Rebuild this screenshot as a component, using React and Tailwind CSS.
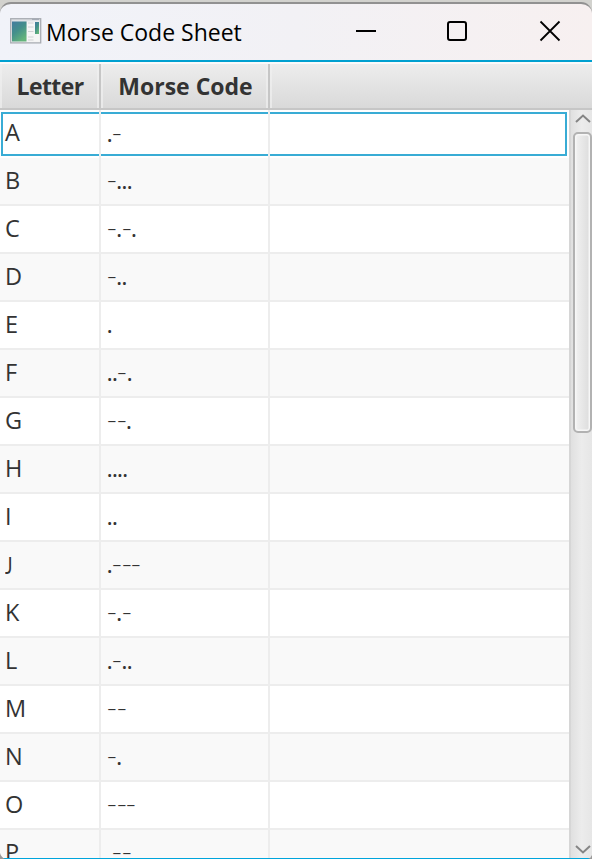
import React from "react";

const rows = [
  ["A", ".-"],
  ["B", "-..."],
  ["C", "-.-."],
  ["D", "-.."],
  ["E", "."],
  ["F", "..-."],
  ["G", "--."],
  ["H", "...."],
  ["I", ".."],
  ["J", ".---"],
  ["K", "-.-"],
  ["L", ".-.."],
  ["M", "--"],
  ["N", "-."],
  ["O", "---"],
  ["P", ".--."],
];

function AppIcon() {
  return (
    <svg width="32" height="26" viewBox="0 0 32 26" className="shrink-0">
      <defs>
        <linearGradient id="pane" x1="0" y1="0" x2="0.6" y2="1">
          <stop offset="0" stopColor="#437ba0" />
          <stop offset="0.5" stopColor="#438f8b" />
          <stop offset="1" stopColor="#64b47b" />
        </linearGradient>
        <linearGradient id="frame" x1="0" y1="0" x2="0" y2="1">
          <stop offset="0" stopColor="#dde0e4" />
          <stop offset="1" stopColor="#f3f3f3" />
        </linearGradient>
      </defs>
      <rect x="0.7" y="0.7" width="30" height="24.2" fill="url(#frame)" stroke="#a9adb3" strokeWidth="1.3" />
      <rect x="2" y="3.5" width="14.5" height="20" fill="url(#pane)" />
      <rect x="17" y="3.5" width="12.5" height="20" fill="#f6f6f6" />
      <path d="M18 5h5.5M18 9h5.5M18 13.5h5.5M18 19h5.5M18 22h5.5" stroke="#d0d2d4" strokeWidth="1.2" />
      <rect x="25" y="4" width="4" height="12" fill="url(#pane)" />
      <path d="M22 1.3h7" stroke="#9ba3ae" strokeWidth="1" />
    </svg>
  );
}

function HeaderCell({ children, className }) {
  return (
    <div className={`flex h-full items-center justify-center border-r-2 border-[#c6c6c6] ${className}`}>
      <div className="flex h-full w-full items-center justify-center border-x-2 border-[#f0f0f0]/70 text-[23px] font-bold whitespace-nowrap">
        {children}
      </div>
    </div>
  );
}

function Morse({ code }) {
  return (
    <span className="flex">
      {[...code].map((c, i) => (
        <span key={i} className={c === "-" ? "flex w-[9.6px] justify-center" : "flex w-[5.2px] justify-center"}>
          <span className={c === "-" ? "scale-x-125 font-light" : "translate-y-px"}>{c}</span>
        </span>
      ))}
    </span>
  );
}

function Row({ letter, code, index }) {
  const first = index === 0;
  const bg = index % 2 ? "bg-[#f9f9f9]" : "bg-white";
  const line = first ? "border-transparent" : "border-[#ededed]";
  const focus = "h-[44px] border-y-2 border-[#39acd5]";
  // The J sits on the baseline with a narrow hook.
  const glyph =
    letter === "J"
      ? "inline-block origin-left scale-x-75 font-['Lato','Open_Sans',sans-serif] pt-px"
      : "";
  return (
    <div className={`flex h-12 shrink-0 border-b-2 ${bg} ${line}`}>
      <div className={`w-[99px] shrink-0 ${first ? "pt-[2px] pl-px" : ""}`}>
        <div className={`flex items-center ${first ? focus + " border-l-2 pb-[4px] pl-[2px]" : "h-[46px] pb-[2px] pl-[5px]"}`}>
          <span className={`text-[23.5px] leading-[24px] ${glyph}`}>{letter}</span>
        </div>
      </div>
      <div className="-mb-[2px] w-[2px] shrink-0 bg-[#ededed]" />
      <div className={`w-[167px] shrink-0 ${first ? "pt-[2px]" : ""}`}>
        <div className={`flex items-center pl-[6px] ${first ? focus + " pb-[4px]" : "h-[46px] pb-[4px]"}`}>
          <span className="text-[24px] leading-none">
            <Morse code={code} />
          </span>
        </div>
      </div>
      <div className="-mb-[2px] w-[2px] shrink-0 bg-[#ededed]" />
      <div className={`grow ${first ? "pt-[2px] pr-[2px]" : ""}`}>
        <div className={first ? focus + " border-r-2" : ""} />
      </div>
    </div>
  );
}

export default function App() {
  return (
    <div className="relative flex h-[859px] w-[592px] flex-col overflow-hidden bg-[#d2d2ce] pt-[2px] font-['Open_Sans','Noto_Sans',sans-serif] text-[#333333]">
      <div className="flex h-[58px] shrink-0 items-center rounded-t-[11px] border-t-2 border-[#919191] bg-linear-to-r from-[#f1f3f9] via-[#f2f1f5] to-[#f7f0f0] pl-[10px]">
        <div className="-mt-[2px] flex">
          <AppIcon />
        </div>
        <span className="ml-[4px] w-[210px] text-[23px] whitespace-nowrap text-black">Morse Code Sheet</span>
        <svg width="336" height="56" viewBox="256 4 336 56" fill="none" stroke="#000" strokeWidth="2" className="shrink-0">
          <path d="M356 31h20" />
          <rect x="448" y="22" width="18" height="18" rx="2" />
          <path d="M540.5 21.5l19 19M559.5 21.5l-19 19" strokeWidth="1.8" />
        </svg>
      </div>
      <div className="h-[2px] shrink-0 bg-[#00a0d0]" />
      <div className="flex h-[48px] shrink-0 border-t-2 border-b-2 border-t-[#fafafa] border-b-[#c6c6c6] bg-linear-to-b from-[#ededed] to-[#d9d9d9]">
        <HeaderCell className="w-[101px]">
          <span className="pl-[1px] tracking-[-0.6px]">Letter</span>
        </HeaderCell>
        <HeaderCell className="w-[169px]">
          <span className="pl-[2px]">Morse Code</span>
        </HeaderCell>
        <div className="grow border-l-2 border-[#f0f0f0]/70" />
      </div>
      <div className="flex h-[748px] shrink-0">
        <div className="flex w-[569px] shrink-0 flex-col overflow-hidden">
          {rows.map(([l, c], i) => (
            <Row key={l} letter={l} code={c} index={i} />
          ))}
        </div>
        <div className="flex w-[23px] shrink-0 flex-col border-l-2 border-[#d6d6d6] bg-linear-to-r from-[#e0e0e0] via-[#ececec] to-[#e6e6e6]">
          <svg width="21" height="22" viewBox="0 0 21 22" fill="none" stroke="#858585" strokeWidth="2" className="shrink-0">
            <path d="M5 12l7-6.5 7 6.5" />
          </svg>
          <div className="ml-[2px] h-[301px] shrink-0 rounded-[5px] border-2 border-[#b2b2b2] bg-linear-to-r from-[#f2f2f2] to-[#dcdcdc] shadow-[inset_0_0_0_1.5px_#f7f7f7]" />
          <div className="grow" />
          <svg width="21" height="22" viewBox="0 0 21 22" fill="none" stroke="#858585" strokeWidth="2" className="shrink-0">
            <path d="M5 10l7 6.5 7-6.5" />
          </svg>
        </div>
      </div>
      <div className="h-px shrink-0 bg-[#00a5dc]" />
      <svg width="6" height="6" className="absolute bottom-0 left-0">
        <path d="M0 0q1 4 5 6H0z" fill="#999" />
      </svg>
      <svg width="4" height="4" className="absolute right-0 bottom-0">
        <path d="M4 0q-1 3-4 4h4z" fill="#999" />
      </svg>
    </div>
  );
}
